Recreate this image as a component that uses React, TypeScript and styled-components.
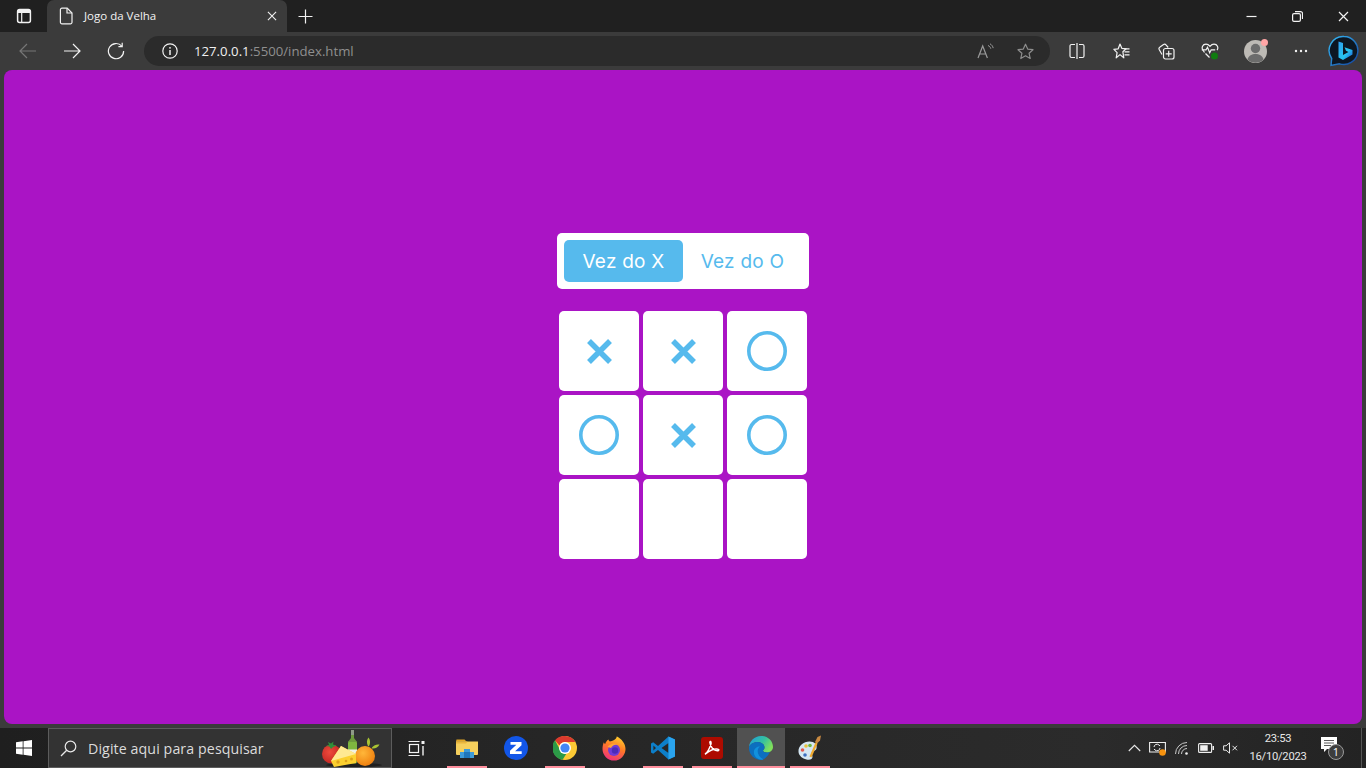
import React from "react";
import styled, { createGlobalStyle } from "styled-components";

const Global = createGlobalStyle`
  html, body { margin: 0; padding: 0; height: 100%; overflow: hidden; background: #3b3b3b; }
  #root { height: 100%; }
  * { box-sizing: border-box; }
`;

const Shell = styled.div`
  width: 1366px;
  height: 768px;
  display: flex;
  flex-direction: column;
  font-family: "Open Sans", "Noto Sans", sans-serif;
  background: #3b3b3b;
`;

const TabStrip = styled.header`
  height: 32px;
  display: flex;
  align-items: stretch;
  background: #202020;
`;

const SideToggle = styled.div`
  width: 47px;
  display: flex;
  align-items: center;
  justify-content: center;
`;

const Tab = styled.div`
  width: 240px;
  display: flex;
  align-items: center;
  padding: 0 10px 1px 12px;
  background: #3b3b3b;
  border-radius: 7px 7px 0 0;
  color: #f2f2f2;
  font-size: 11.5px;
`;

const TabTitle = styled.span`
  flex: 1;
  margin-left: 11px;
`;

const NewTab = styled.div`
  width: 36px;
  display: flex;
  align-items: center;
  justify-content: center;
`;

const WindowControls = styled.div`
  margin-left: auto;
  display: flex;
`;

const WindowButton = styled.div`
  width: 46px;
  display: flex;
  align-items: center;
  justify-content: center;
`;

const Toolbar = styled.nav`
  height: 34px;
  margin-top: 2px;
  padding-left: 6px;
  display: flex;
  align-items: center;
  background: #3b3b3b;
`;

const NavButton = styled.div`
  width: 44px;
  height: 30px;
  display: flex;
  align-items: center;
  justify-content: center;
`;

const AddressBar = styled.div`
  width: 906px;
  height: 30px;
  margin-left: 6px;
  margin-right: 5px;
  padding: 0 16px 0 18px;
  display: flex;
  align-items: center;
  border-radius: 15px;
  background: #2b2b2b;
  font-size: 13.2px;
`;

const Host = styled.span`
  margin-left: 16px;
  color: #f0f0f0;
`;

const UrlRest = styled.span`
  color: #8f8f8f;
`;

const AddressEnd = styled.div`
  margin-left: auto;
  width: 57px;
  display: flex;
  justify-content: space-between;
  align-items: center;
`;

const Actions = styled.div`
  flex: 1;
  display: flex;
`;

const ActionButton = styled.div<{ $width?: number }>`
  width: ${(p) => p.$width ?? 44}px;
  height: 30px;
  display: flex;
  align-items: center;
  justify-content: center;
`;

const Viewport = styled.main`
  flex: 1;
  margin: 2px 4px 4px;
  border-radius: 8px;
  background: #aa14c5;
  display: flex;
  flex-direction: column;
  align-items: center;
  justify-content: center;
  padding-bottom: 2px;
`;

const TurnPanel = styled.div`
  width: 252px;
  height: 56px;
  padding: 7px;
  display: flex;
  background: #ffffff;
  border-radius: 5px;
`;

const TurnLabel = styled.div<{ $active?: boolean }>`
  width: 119px;
  height: 42px;
  display: flex;
  align-items: center;
  justify-content: center;
  border-radius: 5px;
  font-family: Inter, "Open Sans", sans-serif;
  font-optical-sizing: none;
  font-variation-settings: "opsz" 14;
  font-size: 19px;
  font-weight: 400;
  letter-spacing: 0.25px;
  color: ${(p) => (p.$active ? "#ffffff" : "#56baed")};
  background: ${(p) => (p.$active ? "#56baed" : "transparent")};
`;

const Board = styled.div`
  margin-top: 22px;
  display: grid;
  grid-template-columns: repeat(3, 80px);
  grid-auto-rows: 80px;
  gap: 4px;
`;

const Cell = styled.div`
  display: flex;
  align-items: center;
  justify-content: center;
  background: #ffffff;
  border-radius: 5px;
`;

const Taskbar = styled.footer`
  height: 40px;
  display: flex;
  align-items: stretch;
  background: linear-gradient(90deg, #1f1f1f 0%, #262626 40%, #2b2b2b 80%, #232323 100%);
`;

const StartButton = styled.div`
  width: 48px;
  display: flex;
  align-items: center;
  justify-content: center;
`;

const SearchBox = styled.div`
  width: 344px;
  padding: 0 7px 0 11px;
  display: flex;
  align-items: center;
  background: #333333;
  border: 1px solid #5c5c5c;
  color: #dcdcdc;
  font-size: 14.2px;
`;

const SearchText = styled.span`
  flex: 1;
  margin-left: 11px;
  letter-spacing: 0.1px;
`;

const TaskView = styled.div`
  width: 48px;
  display: flex;
  align-items: center;
  justify-content: center;
`;

const AppRow = styled.div`
  margin-left: 3px;
  display: flex;
  gap: 1px;
`;

const AppSlot = styled.div<{ $active?: boolean; $flag?: boolean }>`
  position: relative;
  width: 48px;
  display: flex;
  align-items: center;
  justify-content: center;
  background: ${(p) => (p.$active ? "#515151" : "transparent")};
  &::after {
    content: "";
    display: ${(p) => (p.$flag ? "block" : "none")};
    position: absolute;
    left: ${(p) => (p.$active ? "0" : "4px")};
    right: ${(p) => (p.$active ? "0" : "4px")};
    bottom: 0;
    height: 2px;
    background: #ff8f9d;
  }
`;

const Tray = styled.div`
  margin-left: auto;
  display: flex;
  align-items: center;
`;

const TrayIcon = styled.div`
  width: 24px;
  display: flex;
  align-items: center;
  justify-content: center;
`;

const Clock = styled.div`
  width: 72px;
  display: flex;
  flex-direction: column;
  align-items: center;
  color: #e8e8e8;
  font-family: Roboto, "Open Sans", sans-serif;
  font-size: 11.2px;
  letter-spacing: -0.25px;
  line-height: 18px;
`;

const Notify = styled.div`
  width: 34px;
  margin-left: 1px;
  display: flex;
  align-items: center;
  justify-content: center;
`;

const DesktopPeek = styled.div`
  width: 5px;
  height: 100%;
  margin-left: 12px;
  border-left: 1px solid #555;
`;

const s = { fill: "none", stroke: "#f2f2f2", strokeWidth: 1.2 };

const SidebarIcon = () => (
  <svg width="16" height="16" viewBox="0 0 16 16">
    <rect x="1.6" y="1.6" width="12.8" height="12.8" rx="2" {...s} strokeWidth={1.5} />
    <path d="M2 2h12v3H2z" fill="#f2f2f2" />
    <path d="M5.7 5v9" {...s} />
  </svg>
);
const DocIcon = () => (
  <svg width="14" height="18" viewBox="0 0 14 18">
    <path d="M3 1.2h5.2L13 6v9.2a1.6 1.6 0 0 1-1.6 1.6H3a1.6 1.6 0 0 1-1.6-1.6V2.8A1.6 1.6 0 0 1 3 1.2z" {...s} />
    <path d="M8 1.2V6h5" {...s} />
  </svg>
);
const CloseIcon = ({ size = 11 }: { size?: number }) => (
  <svg width={size} height={size} viewBox="0 0 11 11">
    <path d="M1 1l9 9M10 1l-9 9" {...s} />
  </svg>
);
const PlusIcon = () => (
  <svg width="15" height="15" viewBox="0 0 15 15">
    <path d="M7.5 0.5v14M0.5 7.5h14" {...s} />
  </svg>
);
const MinIcon = () => (
  <svg width="11" height="11" viewBox="0 0 11 11">
    <path d="M0.5 5.5h10" {...s} />
  </svg>
);
const RestoreIcon = () => (
  <svg width="11" height="11" viewBox="0 0 11 11">
    <rect x="0.6" y="2.6" width="7.8" height="7.8" rx="1.4" {...s} />
    <path d="M3 .6h5.5a2 2 0 0 1 2 2V8" {...s} />
  </svg>
);
const ArrowIcon = ({ color }: { color: string }) => (
  <svg width="18" height="16" viewBox="0 0 18 16">
    <path d="M1 8h16M10 1l7 7-7 7" fill="none" stroke={color} strokeWidth={1.2} />
  </svg>
);
const BackIcon = () => (
  <svg width="18" height="16" viewBox="0 0 18 16">
    <path d="M17 8H1M8 1L1 8l7 7" fill="none" stroke="#777" strokeWidth={1.2} />
  </svg>
);
const ReloadIcon = () => (
  <svg width="18" height="18" viewBox="0 0 18 18">
    <path d="M14.8 4.2A7.6 7.6 0 1 0 16.6 9" {...s} />
    <path d="M15.2 0.8v3.8h-3.8" {...s} />
  </svg>
);
const InfoIcon = () => (
  <svg width="16" height="16" viewBox="0 0 16 16">
    <circle cx="8" cy="8" r="7.2" {...s} />
    <path d="M8 7v5" {...s} strokeWidth={1.5} />
    <circle cx="8" cy="4.8" r="0.9" fill="#f2f2f2" />
  </svg>
);
const ReadIcon = () => (
  <svg width="17" height="16" viewBox="0 0 17 16">
    <path d="M1 15L5.7 3 10.4 15M2.7 11h6" fill="none" stroke="#9a9a9a" strokeWidth={1.2} />
    <path d="M11 2.500c1.500.6 2.400 1.700 2.800 3.200M13 .8c1.800 1 2.800 2.500 3.200 4.300" fill="none" stroke="#9a9a9a" strokeWidth={1} />
  </svg>
);
const StarPath = "M8.5 1.2l2.2 4.9 5.3.6-3.9 3.6 1.1 5.2-4.7-2.7-4.7 2.7 1.1-5.2L1 6.7l5.3-.6z";
const StarIcon = () => (
  <svg width="17" height="17" viewBox="0 0 17 17">
    <path d={StarPath} fill="none" stroke="#8d8d8d" strokeWidth={1.2} strokeLinejoin="round" />
  </svg>
);
const SplitIcon = () => (
  <svg width="16" height="16" viewBox="0 0 16 16">
    <path d="M8 0v16" {...s} />
    <path d="M6 1.500H2.500a1.500 1.500 0 0 0-1.500 1.500v10a1.500 1.500 0 0 0 1.500 1.500H6M10 1.500h3.500A1.500 1.500 0 0 1 15 3v10a1.500 1.500 0 0 1-1.500 1.500H10" {...s} />
  </svg>
);
const FavIcon = () => (
  <svg width="17" height="17" viewBox="0 0 17 17">
    <path d="M7 1l1.800 4.300 4.300.5-3.200 3 .9 6-3.800-3.200-3.800 3.200 .9-5.200-3.200-3.300 4.300-.5z" {...s} strokeLinejoin="round" />
    <path d="M11.500 5.800H16.500M11.500 8.800H16.500M11.500 11.800H16.500" {...s} />
  </svg>
);
const CollectIcon = () => (
  <svg width="17" height="17" viewBox="0 0 17 17">
    <path d="M4 11.500L1.200 6.500c-.5-1 0-2 .8-2.500L5.500 1.500c1-.5 2-.2 2.700.6l2 2.400" {...s} />
    <rect x="5.500" y="5.500" width="10.500" height="10.500" rx="2" {...s} />
    <path d="M10.700 7.800v6M7.700 10.800h6" {...s} />
  </svg>
);
const HealthIcon = () => (
  <svg width="18" height="18" viewBox="0 0 18 18">
    <path d="M3.500 10.500L2 8.200C.2 5.800 1.600 2.200 5 2.200c1.800 0 3 1 4 2.200 1-1.200 2.200-2.200 4-2.200 3.400 0 4.800 3.600 3 6" {...s} />
    <path d="M0.800 7.800h4.200l1.500-2.500 2.200 5.500 1.500-3h4" {...s} />
    <path d="M4.500 11.500l4 4" {...s} />
    <circle cx="13.500" cy="14" r="3.500" fill="#107c10" />
  </svg>
);
const Avatar = () => (
  <svg width="24" height="24" viewBox="0 0 24 24" style={{ overflow: "visible" }}>
    <circle cx="11.500" cy="12.500" r="11.500" fill="#bdbab5" />
    <circle cx="11.500" cy="9.500" r="4.700" fill="#6c6c6c" />
    <path d="M3.500 20.500c1-4 4.500-5.500 8-5.500s7 1.500 8 5.500a11.500 11.500 0 0 1-16 0z" fill="#6c6c6c" />
    <circle cx="20.500" cy="3.500" r="3.500" fill="#ffa6a6" />
  </svg>
);
const MoreIcon = () => (
  <svg width="14" height="4" viewBox="0 0 14 4">
    <circle cx="2" cy="2" r="1.200" fill="#f2f2f2" />
    <circle cx="7" cy="2" r="1.200" fill="#f2f2f2" />
    <circle cx="12" cy="2" r="1.200" fill="#f2f2f2" />
  </svg>
);
const BingIcon = () => (
  <svg width="32" height="32" viewBox="0 0 32 32">
    <defs>
      <linearGradient id="bg1" x1="0" y1="0" x2="1" y2="1">
        <stop offset="0" stopColor="#37bdf8" />
        <stop offset="1" stopColor="#123f9c" />
      </linearGradient>
      <linearGradient id="bg2" x1="0" y1="0" x2="1" y2="1">
        <stop offset="0" stopColor="#2d9ff0" />
        <stop offset="0.600" stopColor="#27c4ee" />
        <stop offset="1" stopColor="#1f55d8" />
      </linearGradient>
    </defs>
    <path d="M16 1.500a14 14 0 1 1-4.500 27.300L3 30.500l.7-7A14 14 0 0 1 16 1.500z" fill="#0c1622" stroke="url(#bg1)" strokeWidth={1.400} />
    <path d="M10.500 6.500l4.500 1.500v12l5.500-3-2.500-1.200-1.500-3.600 8 2.800v4.500l-9.500 5.500-4.500-2.500z" fill="url(#bg2)" />
  </svg>
);

const WinLogo = () => (
  <svg width="16" height="16" viewBox="0 0 16 16">
    <path d="M0 2.300L6.700 1.300V7.600H0zM7.500 1.200L16 0V7.600H7.500zM0 8.400H6.700V14.700L0 13.700zM7.500 8.400H16V16L7.500 14.800z" fill="#fff" />
  </svg>
);
const SearchIcon = () => (
  <svg width="17" height="17" viewBox="0 0 17 17">
    <circle cx="10.500" cy="6.500" r="5.300" fill="none" stroke="#e8e8e8" strokeWidth={1.200} />
    <path d="M6.700 10.300L1 16" fill="none" stroke="#e8e8e8" strokeWidth={1.300} />
  </svg>
);
const FoodArt = () => (
  <svg width="66" height="40" viewBox="0 0 66 40" style={{ flexShrink: 0 }}>
    <defs>
      <radialGradient id="orange" cx="0.400" cy="0.350" r="0.700">
        <stop offset="0" stopColor="#ffb73a" />
        <stop offset="1" stopColor="#ee7d0c" />
      </radialGradient>
      <radialGradient id="tomato" cx="0.400" cy="0.400" r="0.700">
        <stop offset="0" stopColor="#ee4a3c" />
        <stop offset="1" stopColor="#bd2320" />
      </radialGradient>
    </defs>
    <ellipse cx="36" cy="37" rx="28" ry="2" fill="#1f1f1f" />
    <circle cx="13.500" cy="26" r="9.500" fill="url(#tomato)" />
    <path d="M8 18l3-1-1-3 3 1.500 2.500-2-.5 3 3.500 1-3.500 1.500-2 2-1.500-2.500z" fill="#2f8f3a" />
    <rect x="30" y="13" width="9" height="22.500" rx="2" fill="#7fb63f" />
    <path d="M33 2h3v8l3 4h-9l3-4z" fill="#6d9a3c" />
    <rect x="33" y="2" width="3" height="5" fill="#8f9a88" />
    <rect x="30" y="21.500" width="9" height="8" fill="#f0f2e6" />
    <circle cx="47" cy="28" r="10" fill="url(#orange)" />
    <path d="M50 18c-1.500-3-1.500-6 .5-8.500 2 2.500 2 6 .5 8.500z" fill="#a9c433" />
    <path d="M54 19.500c2-2.500 4.500-3.500 7.500-3-1.500 3-4.500 4.500-7.500 4z" fill="#a9c433" />
    <path d="M13 33l10-15 15 8v9l-22 4z" fill="#fcd02f" />
    <path d="M23 18l15 8-25 7z" fill="#ffe992" />
    <circle cx="20" cy="34" r="1.700" fill="#dfa31b" />
    <circle cx="28" cy="33" r="1.300" fill="#dfa31b" />
    <circle cx="33.500" cy="31" r="1.500" fill="#dfa31b" />
  </svg>
);
const TaskViewIcon = () => (
  <svg width="17" height="15" viewBox="0 0 17 15">
    <path d="M0.500 0.500h11M0.500 14.500h11" stroke="#f2f2f2" strokeWidth={1.200} />
    <rect x="1.500" y="3.500" width="9" height="8" fill="none" stroke="#f2f2f2" strokeWidth={1.200} />
    <rect x="13.500" y="0" width="3" height="3" fill="#f2f2f2" />
    <path d="M15 5v9.500" stroke="#f2f2f2" strokeWidth={1.400} />
  </svg>
);
const ExplorerIcon = () => (
  <svg width="22" height="20" viewBox="0 0 22 20">
    <path d="M0.500 1.500h8l2 2h-10.500z" fill="#e0a526" />
    <path d="M0 3.500h22v12.500a1 1 0 0 1-1 1H1a1 1 0 0 1-1-1z" fill="#f5cf5d" />
    <path d="M0 5.500h10l1.500-2H0z" fill="#eab63c" />
    <path d="M4 20v-6h4v-3h6v3h4v6z" fill="#3d9ad8" />
    <rect x="8" y="14" width="6" height="6" fill="#2076ba" />
  </svg>
);
const ZoomIcon = () => (
  <svg width="24" height="24" viewBox="0 0 24 24">
    <circle cx="12" cy="12" r="12" fill="#1256e8" />
    <path d="M6.500 6h11v3.200l-6.400 6h6.600V18H6v-3.200l6.400-6H6.500z" fill="#fff" />
  </svg>
);
const ChromeIcon = () => (
  <svg width="24" height="24" viewBox="0 0 24 24">
    <circle cx="12" cy="12" r="12" fill="#fcc934" />
    <path d="M12 0a12 12 0 0 1 10.400 6H12a6 6 0 0 0-5.500 3.600L2 4.300A12 12 0 0 1 12 0z" fill="#db3a2e" />
    <path d="M2 4.300l5.400 10.200a6 6 0 0 0 5.800 3.400L9.600 23.800A12 12 0 0 1 2 4.300z" fill="#2c9a47" />
    <circle cx="12" cy="12" r="6" fill="#fff" />
    <circle cx="12" cy="12" r="4.600" fill="#4286f5" />
  </svg>
);
const FirefoxIcon = () => (
  <svg width="24" height="25" viewBox="0 0 24 25">
    <defs>
      <linearGradient id="ff" x1="0.700" y1="0" x2="0.300" y2="1">
        <stop offset="0" stopColor="#ffd22e" />
        <stop offset="0.450" stopColor="#ff7a25" />
        <stop offset="1" stopColor="#ef2f7e" />
      </linearGradient>
    </defs>
    <path d="M15 0.500c4.500 2.500 8.500 7 8.500 12.500A11.500 11.500 0 0 1 .5 13c0-2.500.5-5 1.300-6.800.4 1 .8 1.500 1.400 1.800.6-2 1.600-3.500 3.300-4.500.2 1 .6 1.500 1.300 2 2.700-.3 6.500-1.800 7.200-5.500z" fill="url(#ff)" />
    <circle cx="12" cy="14" r="6" fill="#6f3bd6" />
    <circle cx="13" cy="14.500" r="3.200" fill="#4c2bb8" />
    <path d="M5.500 11c2-3 7-4.500 10-2.500-2.500 0-5.500 1-6.500 3.500-1-.5-2-.8-3.500-1z" fill="#ffa436" />
  </svg>
);
const VSCodeIcon = () => (
  <svg width="24" height="24" viewBox="0 0 24 24">
    <path fillRule="evenodd" d="M17.500 0.500L24 3.500v17l-6.500 3L7 14 2.200 17.700 0 16.400V7.600l2.200-1.300L7 10zM17.500 7L10.500 12l7 5zM2.400 9.500v5L5 12z" fill="#0d7fc9" />
    <path fillRule="evenodd" d="M17.500 0.500L24 3.500v17l-6.500 3z" fill="#2aa4ee" />
  </svg>
);
const AcrobatIcon = () => (
  <svg width="22" height="22" viewBox="0 0 22 22">
    <rect width="22" height="22" rx="3" fill="#ad0b00" />
    <path d="M4 17c2-1 4-4 6-10 .4-1.500-.3-3-1-2.500-.8.600 1 5 2.500 7s4.500 2.500 6 2c1-.5 0-1.500-2-1.500-3 0-7 1.500-11 5z" fill="none" stroke="#fff" strokeWidth={1.400} />
  </svg>
);
const EdgeIcon = () => (
  <svg width="24" height="24" viewBox="0 0 24 24">
    <defs>
      <linearGradient id="eg" x1="0" y1="0" x2="1" y2="0.500">
        <stop offset="0" stopColor="#1b9de2" />
        <stop offset="0.600" stopColor="#35c1a0" />
        <stop offset="1" stopColor="#7fe05c" />
      </linearGradient>
    </defs>
    <path d="M12 0c7 0 12 5 12 11 0 3.500-3 5.500-6 5.500-2.500 0-4-1-4-2 0-.5 1.500-1 1.500-3 0-3-3-5.500-7-5.500S1 8.500 0 11C.5 5 5.500 0 12 0z" fill="url(#eg)" />
    <path d="M0 11c1-2.500 4-5 8.500-5 4 0 7 2.500 7 5.500 0 2-1.500 2.500-1.500 3 0 1 1.500 2 4 2 1.500 0 2-.2 3-.7C18.500 21 15 24 12 24 5 24-.5 18 0 11z" fill="#0c6fbf" />
    <path d="M9.500 12c-2 3-.5 9 5 11.600C10 24.500 4 21 5 15c.5-3 4-5 6-4.500-.7.300-1 .9-1.500 1.500z" fill="#1191dd" />
  </svg>
);
const PaintIcon = () => (
  <svg width="24" height="26" viewBox="0 0 24 26">
    <path d="M0.500 17c-.5-6 5-10.500 11-10.500 5 0 8 3 7 7-1 3-3.500 1.500-4.500 3.500s.5 3 .5 5c0 2-2.500 3.500-6 2.500C4.500 23.500 1 21 .5 17z" fill="#d5e6f2" />
    <circle cx="4.500" cy="15" r="1.800" fill="#e2574c" />
    <circle cx="8" cy="11" r="1.800" fill="#e8c23c" />
    <circle cx="12" cy="10.500" r="1.800" fill="#6eb53f" />
    <circle cx="7" cy="20" r="1.800" fill="#3f6fbe" />
    <path d="M23 .5l-3.500 1.500-2.500 5 2 1.500 3-3z" fill="#c98a42" />
    <path d="M17.500 7.500l2 1-6 14-2-1z" fill="#efa92f" />
  </svg>
);
const Chevron = () => (
  <svg width="13" height="8" viewBox="0 0 13 8">
    <path d="M0.800 7l5.700-5.700L12.200 7" fill="none" stroke="#e8e8e8" strokeWidth={1.100} />
  </svg>
);
const SecurityIcon = () => (
  <svg width="18" height="16" viewBox="0 0 18 16">
    <path d="M0.600 2.500h15.800v9.500H0.600z" fill="none" stroke="#eee" strokeWidth={1.100} />
    <path d="M5 7a3 3 0 0 1 5-2l1 1M11 8a3 3 0 0 1-5 2L5 9" fill="none" stroke="#eee" strokeWidth={1} />
    <circle cx="13.500" cy="12.500" r="3.300" fill="#f7920e" />
  </svg>
);
const WifiIcon = () => (
  <svg width="15" height="13" viewBox="0 0 15 13">
    <g fill="none" stroke="#c9c9c9" strokeWidth={1}>
      <path d="M0.500 12a11.500 11.500 0 0 1 11.500-11.500" />
      <path d="M3.500 12a8.500 8.500 0 0 1 8.500-8.500" />
      <path d="M6.500 12a5.500 5.500 0 0 1 5.500-5.500" />
    </g>
    <circle cx="11.500" cy="11.500" r="1.300" fill="#f0f0f0" />
  </svg>
);
const BatteryIcon = () => (
  <svg width="16" height="10" viewBox="0 0 16 10">
    <rect x="0.600" y="0.600" width="13" height="8.800" rx="1" fill="none" stroke="#f0f0f0" strokeWidth={1.100} />
    <rect x="2.200" y="2.200" width="7.500" height="5.600" fill="#f0f0f0" />
    <rect x="14.500" y="3" width="1.500" height="4" fill="#f0f0f0" />
  </svg>
);
const MuteIcon = () => (
  <svg width="15" height="12" viewBox="0 0 15 12">
    <path d="M0.600 3.800h2.500L6.500.800v10.400L3.100 8.200H.6z" fill="none" stroke="#e8e8e8" strokeWidth={1} />
    <path d="M9.500 3.800l4.500 4.500M14 3.800l-4.500 4.500" stroke="#e8e8e8" strokeWidth={1} />
  </svg>
);
const NotifyIcon = () => (
  <svg width="26" height="26" viewBox="0 0 26 26">
    <path d="M2 2h16v12H8l-3 3v-3H2z" fill="#fff" />
    <path d="M5 5.500h10M5 8h10M5 10.500h7" stroke="#333" strokeWidth={0.8} />
    <circle cx="17" cy="17" r="7.500" fill="#3d3d3d" stroke="#9a9a9a" strokeWidth={1} />
    <text x="17" y="21" textAnchor="middle" fontSize="11" fontFamily="Open Sans, sans-serif" fill="#fff">1</text>
  </svg>
);

const Cross = () => (
  <svg width="25" height="25" viewBox="0 0 25 25">
    <path d="M2 2l21 21M23 2L2 23" fill="none" stroke="#56baed" strokeWidth={5.500} />
  </svg>
);
const Nought = () => (
  <svg width="40" height="40" viewBox="0 0 40 40">
    <circle cx="20" cy="20" r="18.200" fill="none" stroke="#56baed" strokeWidth={3.600} />
  </svg>
);

const board = ["x", "x", "o", "o", "x", "o", "", "", ""];

const apps: { icon: React.ReactNode; active?: boolean; flag?: boolean }[] = [
  { icon: <ExplorerIcon />, flag: true },
  { icon: <ZoomIcon /> },
  { icon: <ChromeIcon />, flag: true },
  { icon: <FirefoxIcon /> },
  { icon: <VSCodeIcon />, flag: true },
  { icon: <AcrobatIcon />, flag: true },
  { icon: <EdgeIcon />, active: true, flag: true },
  { icon: <PaintIcon />, flag: true },
];

export default function App() {
  return (
    <Shell>
      <Global />
      <TabStrip>
        <SideToggle><SidebarIcon /></SideToggle>
        <Tab>
          <DocIcon />
          <TabTitle>Jogo da Velha</TabTitle>
          <CloseIcon size={10} />
        </Tab>
        <NewTab><PlusIcon /></NewTab>
        <WindowControls>
          <WindowButton><MinIcon /></WindowButton>
          <WindowButton><RestoreIcon /></WindowButton>
          <WindowButton><CloseIcon /></WindowButton>
        </WindowControls>
      </TabStrip>
      <Toolbar>
        <NavButton><BackIcon /></NavButton>
        <NavButton><ArrowIcon color="#f2f2f2" /></NavButton>
        <NavButton><ReloadIcon /></NavButton>
        <AddressBar>
          <InfoIcon />
          <Host>127.0.0.1<UrlRest>:5500/index.html</UrlRest></Host>
          <AddressEnd>
            <ReadIcon />
            <StarIcon />
          </AddressEnd>
        </AddressBar>
        <Actions>
          <ActionButton><SplitIcon /></ActionButton>
          <ActionButton $width={45}><FavIcon /></ActionButton>
          <ActionButton><CollectIcon /></ActionButton>
          <ActionButton><HealthIcon /></ActionButton>
          <ActionButton $width={48}><Avatar /></ActionButton>
          <ActionButton $width={42}><MoreIcon /></ActionButton>
          <ActionButton><BingIcon /></ActionButton>
        </Actions>
      </Toolbar>
      <Viewport>
        <TurnPanel>
          <TurnLabel $active>Vez do X</TurnLabel>
          <TurnLabel>Vez do O</TurnLabel>
        </TurnPanel>
        <Board>
          {board.map((v, i) => (
            <Cell key={i}>
              {v === "x" && <Cross />}
              {v === "o" && <Nought />}
            </Cell>
          ))}
        </Board>
      </Viewport>
      <Taskbar>
        <StartButton><WinLogo /></StartButton>
        <SearchBox>
          <SearchIcon />
          <SearchText>Digite aqui para pesquisar</SearchText>
          <FoodArt />
        </SearchBox>
        <TaskView><TaskViewIcon /></TaskView>
        <AppRow>
          {apps.map((a, i) => (
            <AppSlot key={i} $active={a.active} $flag={a.flag}>{a.icon}</AppSlot>
          ))}
        </AppRow>
        <Tray>
          <TrayIcon><Chevron /></TrayIcon>
          <TrayIcon><SecurityIcon /></TrayIcon>
          <TrayIcon><WifiIcon /></TrayIcon>
          <TrayIcon><BatteryIcon /></TrayIcon>
          <TrayIcon><MuteIcon /></TrayIcon>
          <Clock><span>23:53</span><span>16/10/2023</span></Clock>
          <Notify><NotifyIcon /></Notify>
          <DesktopPeek />
        </Tray>
      </Taskbar>
    </Shell>
  );
}
